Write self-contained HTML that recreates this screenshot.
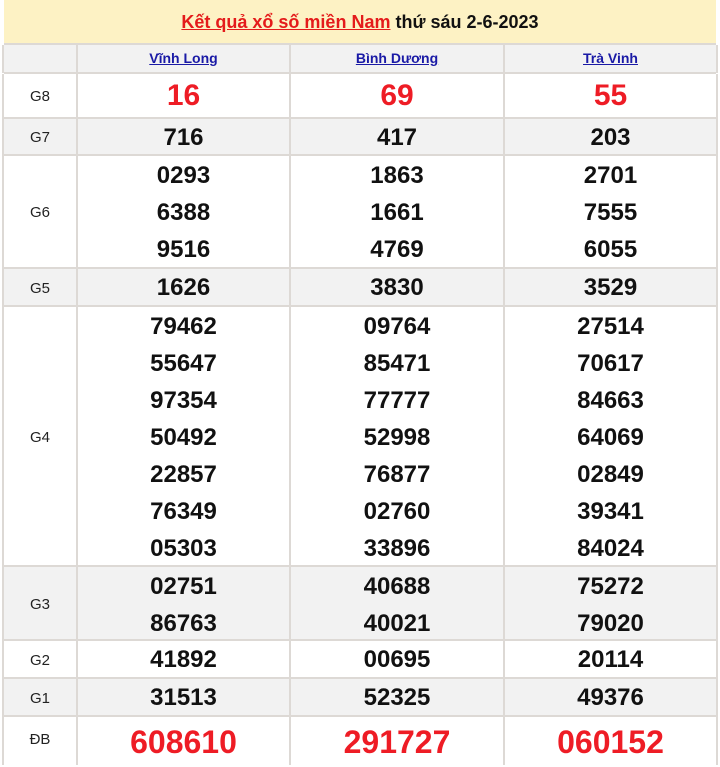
<!DOCTYPE html>
<html><head><meta charset="utf-8"><style>
body{margin:0;width:720px;height:762px;background:#fff;font-family:"Liberation Sans",Arial,sans-serif;position:relative;overflow:hidden}
.hd{position:absolute;left:4px;top:0;width:712px;height:44px;background:#fdf2c4;text-align:center;font-size:18px;font-weight:bold;line-height:44px;color:#111}
.hd a{color:#e41b1b;text-decoration:underline}
.r{position:absolute;left:4px;width:712px;border-top:2px solid #ddd9d5;box-sizing:border-box}
.c{position:absolute;top:0;bottom:0;border-left:2px solid #ddd9d5;box-sizing:border-box;text-align:center}
.c0{left:-2px;width:74px;font-size:15px;color:#222;display:flex;align-items:center;justify-content:center}
.c1{left:72px;width:213px}.c2{left:285px;width:214px}.c3{left:499px;width:215px;border-right:2px solid #ddd9d5}
.n{font-size:24px;font-weight:bold;color:#111;line-height:37px}
.g{background:#f2f2f2}
.red{color:#ee1c25;font-size:30px}
.db{color:#ee1c25;font-size:32px}
.h a{color:#1a1aa6;font-size:14px;font-weight:bold;text-decoration:underline;line-height:27px}
</style></head><body>
<div class="hd"><a>Kết quả xổ số miền Nam</a> thứ sáu 2-6-2023</div>
<div class="r g h" style="top:43px;height:30px"><div class="c c0"></div><div class="c c1"><a>Vĩnh Long</a></div><div class="c c2"><a>Bình Dương</a></div><div class="c c3"><a>Trà Vinh</a></div></div>
<div class="r" style="top:72px;height:47px"><div class="c c0">G8</div><div class="c c1 n red" style="line-height:44px">16</div><div class="c c2 n red" style="line-height:44px">69</div><div class="c c3 n red" style="line-height:44px">55</div></div>
<div class="r g" style="top:117px;height:39px"><div class="c c0">G7</div><div class="c c1 n">716</div><div class="c c2 n">417</div><div class="c c3 n">203</div></div>
<div class="r" style="top:154px;height:115px"><div class="c c0">G6</div><div class="c c1 n" style="padding-top:1px">0293<br>6388<br>9516</div><div class="c c2 n" style="padding-top:1px">1863<br>1661<br>4769</div><div class="c c3 n" style="padding-top:1px">2701<br>7555<br>6055</div></div>
<div class="r g" style="top:267px;height:40px"><div class="c c0">G5</div><div class="c c1 n">1626</div><div class="c c2 n">3830</div><div class="c c3 n">3529</div></div>
<div class="r" style="top:305px;height:262px"><div class="c c0">G4</div><div class="c c1 n" style="padding-top:1px">79462<br>55647<br>97354<br>50492<br>22857<br>76349<br>05303</div><div class="c c2 n" style="padding-top:1px">09764<br>85471<br>77777<br>52998<br>76877<br>02760<br>33896</div><div class="c c3 n" style="padding-top:1px">27514<br>70617<br>84663<br>64069<br>02849<br>39341<br>84024</div></div>
<div class="r g" style="top:565px;height:76px"><div class="c c0">G3</div><div class="c c1 n" style="padding-top:1px">02751<br>86763</div><div class="c c2 n" style="padding-top:1px">40688<br>40021</div><div class="c c3 n" style="padding-top:1px">75272<br>79020</div></div>
<div class="r" style="top:639px;height:40px"><div class="c c0">G2</div><div class="c c1 n">41892</div><div class="c c2 n">00695</div><div class="c c3 n">20114</div></div>
<div class="r g" style="top:677px;height:40px"><div class="c c0">G1</div><div class="c c1 n">31513</div><div class="c c2 n">52325</div><div class="c c3 n">49376</div></div>
<div class="r" style="top:715px;height:50px"><div class="c c0" style="padding-bottom:4px">ĐB</div><div class="c c1 n db" style="line-height:50px">608610</div><div class="c c2 n db" style="line-height:50px">291727</div><div class="c c3 n db" style="line-height:50px">060152</div></div>
</body></html>
